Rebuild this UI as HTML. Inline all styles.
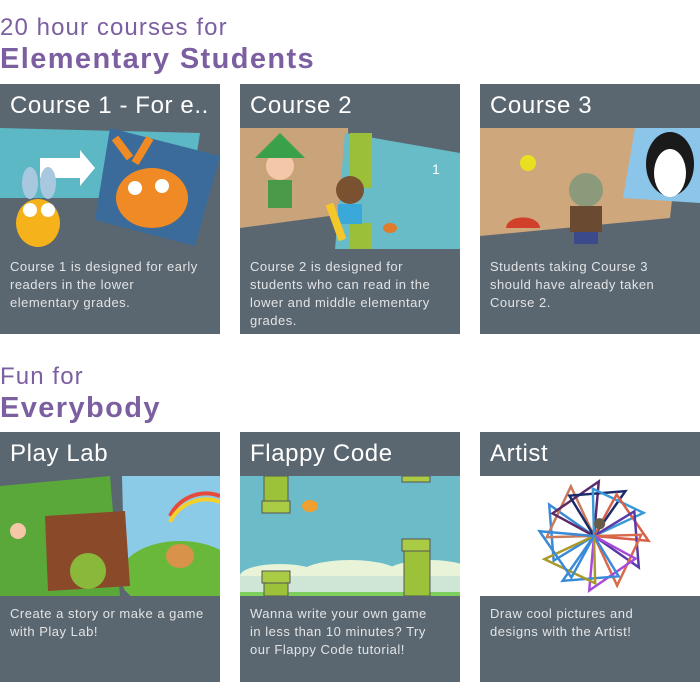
<!DOCTYPE html>
<html><head><style>
body{margin:0;background:#fff;font-family:"Liberation Sans",sans-serif;width:700px;height:682px;overflow:hidden;position:relative}
.h1{position:absolute;left:0;color:#7b5fa0;font-size:24px;line-height:26px;letter-spacing:1.1px}
.h2{position:absolute;left:0;color:#7b5fa0;font-size:29px;font-weight:bold;line-height:32px;letter-spacing:1.4px}
.card{position:absolute;width:220px;height:250px;background:#5b6770;overflow:hidden}
.t{height:44px;color:#fff;font-size:24px;line-height:44px;padding-left:10px;white-space:nowrap;letter-spacing:0.6px}
.img{height:121px;position:relative;overflow:hidden}
.d{color:#e2e4e6;font-size:13px;line-height:18px;padding:9px 10px 0 10px;white-space:nowrap;letter-spacing:0.5px}
svg{display:block}
</style></head><body>
<div class="h1" style="top:15px">20 hour courses for</div>
<div class="h2" style="top:43px">Elementary Students</div>

<div class="card" style="left:0;top:84px"><div class="t">Course 1 - For e..</div>
<div class="img"><svg width="220" height="121">
<rect width="220" height="121" fill="#5b6770"/>
<polygon points="0,0 200,5 190,70 0,70" fill="#5cb8c4"/>
<polygon points="40,30 80,30 80,22 95,40 80,58 80,50 40,50" fill="#fff"/>
<polygon points="110,0 220,28 195,118 95,92" fill="#3a6b9a"/>
<ellipse cx="152" cy="70" rx="36" ry="30" fill="#f08a24"/>
<circle cx="135" cy="60" r="7" fill="#fff"/><circle cx="162" cy="58" r="7" fill="#fff"/>
<path d="M130 30 L115 10 M135 35 L150 10" stroke="#f08a24" stroke-width="8"/>
<ellipse cx="38" cy="95" rx="22" ry="24" fill="#f5b21a"/>
<ellipse cx="30" cy="55" rx="8" ry="16" fill="#a8c8e0"/><ellipse cx="48" cy="55" rx="8" ry="16" fill="#a8c8e0"/>
<circle cx="30" cy="82" r="7" fill="#fff"/><circle cx="48" cy="82" r="7" fill="#fff"/>
</svg></div>
<div class="d">Course 1 is designed for early<br>readers in the lower<br>elementary grades.</div></div>

<div class="card" style="left:240px;top:84px"><div class="t">Course 2</div>
<div class="img"><svg width="220" height="121">
<rect width="220" height="121" fill="#5b6770"/>
<polygon points="0,0 108,0 112,85 0,100" fill="#c9a37a"/>
<polygon points="105,5 220,25 220,121 95,121" fill="#67bcc8"/>
<rect x="110" y="5" width="22" height="55" fill="#9cbf3a"/>
<rect x="110" y="95" width="22" height="26" fill="#9cbf3a"/>
<circle cx="40" cy="38" r="14" fill="#f3c7a8"/>
<polygon points="15,30 40,5 65,30" fill="#3aa14a"/>
<rect x="28" y="52" width="24" height="28" fill="#4a9a4a"/>
<circle cx="110" cy="62" r="14" fill="#7a5232"/>
<rect x="98" y="76" width="24" height="20" fill="#3aa8d8"/>
<rect x="92" y="75" width="8" height="38" fill="#f5c82a" transform="rotate(-20 96 94)"/>
<text x="192" y="46" fill="#fff" font-size="14">1</text>
<ellipse cx="150" cy="100" rx="7" ry="5" fill="#e07b2a"/>
</svg></div>
<div class="d">Course 2 is designed for<br>students who can read in the<br>lower and middle elementary<br>grades.</div></div>

<div class="card" style="left:480px;top:84px"><div class="t">Course 3</div>
<div class="img"><svg width="220" height="121">
<rect width="220" height="121" fill="#5b6770"/>
<polygon points="0,0 200,0 190,90 0,108" fill="#cfa77c"/>
<polygon points="155,0 220,0 220,75 143,70" fill="#8cc5ea"/>
<ellipse cx="190" cy="36" rx="24" ry="32" fill="#1a1a1a"/>
<ellipse cx="190" cy="45" rx="16" ry="24" fill="#fff"/>
<circle cx="48" cy="35" r="8" fill="#e8e020"/>
<path d="M26 100 A16 10 0 0 1 60 100 Z" fill="#d0402a"/>
<circle cx="106" cy="62" r="17" fill="#8a9a7a"/>
<rect x="90" y="78" width="32" height="26" fill="#6a4a30"/>
<rect x="94" y="104" width="24" height="12" fill="#3a4a8a"/>
</svg></div>
<div class="d">Students taking Course 3<br>should have already taken<br>Course 2.</div></div>

<div class="h1" style="top:364px">Fun for</div>
<div class="h2" style="top:392px">Everybody</div>

<div class="card" style="left:0;top:432px"><div class="t">Play Lab</div>
<div class="img" style="height:120px"><svg width="220" height="120">
<rect width="220" height="120" fill="#5b6770"/>
<polygon points="0,10 110,0 120,120 0,120" fill="#5aa83a"/>
<polygon points="122,0 220,0 220,110 125,115" fill="#8ccbe8"/>
<ellipse cx="180" cy="100" rx="60" ry="35" fill="#6ab83a"/>
<path d="M170 40 A40 40 0 0 1 220 20" stroke="#e84a3a" stroke-width="4" fill="none"/>
<path d="M170 46 A40 40 0 0 1 220 26" stroke="#f5d02a" stroke-width="4" fill="none"/>
<polygon points="45,40 125,35 130,110 48,115" fill="#8a4a2a"/>
<ellipse cx="88" cy="95" rx="18" ry="18" fill="#8ab83a"/>
<ellipse cx="180" cy="80" rx="14" ry="12" fill="#d8924a"/>
<circle cx="18" cy="55" r="8" fill="#f3c7a8"/>
</svg></div>
<div class="d">Create a story or make a game<br>with Play Lab!</div></div>

<div class="card" style="left:240px;top:432px"><div class="t">Flappy Code</div>
<div class="img" style="height:120px"><svg width="220" height="120">
<rect width="220" height="120" fill="#6bbcc8"/>
<ellipse cx="40" cy="100" rx="40" ry="12" fill="#e8f3d8"/><ellipse cx="110" cy="98" rx="50" ry="14" fill="#e8f3d8"/><ellipse cx="190" cy="98" rx="45" ry="14" fill="#e8f3d8"/>
<rect x="0" y="100" width="220" height="16" fill="#cfe6d6"/>
<rect x="0" y="116" width="220" height="4" fill="#7ccf5a"/>
<rect x="24" y="0" width="24" height="28" fill="#9cc23a" stroke="#555"/><rect x="22" y="25" width="28" height="12" fill="#aacc44" stroke="#555"/>
<rect x="24" y="102" width="24" height="18" fill="#9cc23a" stroke="#555"/><rect x="22" y="95" width="28" height="12" fill="#aacc44" stroke="#555"/>
<rect x="164" y="70" width="26" height="50" fill="#9cc23a" stroke="#555"/><rect x="162" y="63" width="28" height="12" fill="#aacc44" stroke="#555"/>
<rect x="162" y="0" width="28" height="6" fill="#aacc44" stroke="#555"/>
<ellipse cx="70" cy="30" rx="8" ry="6" fill="#f0a030"/>
</svg></div>
<div class="d">Wanna write your own game<br>in less than 10 minutes? Try<br>our Flappy Code tutorial!</div></div>

<div class="card" style="left:480px;top:432px"><div class="t">Artist</div>
<div class="img" style="height:120px;background:#fff"><svg width="220" height="120">
<g fill="none" stroke-width="2.2" transform="translate(114,60) scale(1.12)">
<g stroke="#3a8ad8"><polygon points="0,0 -40,-28 -36,22"/></g>
<g stroke="#c87a5a" transform="rotate(30)"><polygon points="0,0 -40,-28 -36,22"/></g>
<g stroke="#5a2a6a" transform="rotate(60)"><polygon points="0,0 -40,-28 -36,22"/></g>
<g stroke="#1a2a6a" transform="rotate(90)"><polygon points="0,0 -40,-28 -36,22"/></g>
<g stroke="#3a9ad8" transform="rotate(120)"><polygon points="0,0 -40,-28 -36,22"/></g>
<g stroke="#d8604a" transform="rotate(150)"><polygon points="0,0 -40,-28 -36,22"/></g>
<g stroke="#5a3aa8" transform="rotate(180)"><polygon points="0,0 -40,-28 -36,22"/></g>
<g stroke="#d86a4a" transform="rotate(210)"><polygon points="0,0 -40,-28 -36,22"/></g>
<g stroke="#a84ad8" transform="rotate(240)"><polygon points="0,0 -40,-28 -36,22"/></g>
<g stroke="#3a8ad8" transform="rotate(270)"><polygon points="0,0 -40,-28 -36,22"/></g>
<g stroke="#a89a2a" transform="rotate(300)"><polygon points="0,0 -40,-28 -36,22"/></g>
<g stroke="#3a8ad8" transform="rotate(330)"><polygon points="0,0 -40,-28 -36,22"/></g>
<circle cx="5" cy="-11" r="5" fill="#6a5a4a" stroke="none"/>
</g></svg></div>
<div class="d">Draw cool pictures and<br>designs with the Artist!</div></div>
</body></html>
